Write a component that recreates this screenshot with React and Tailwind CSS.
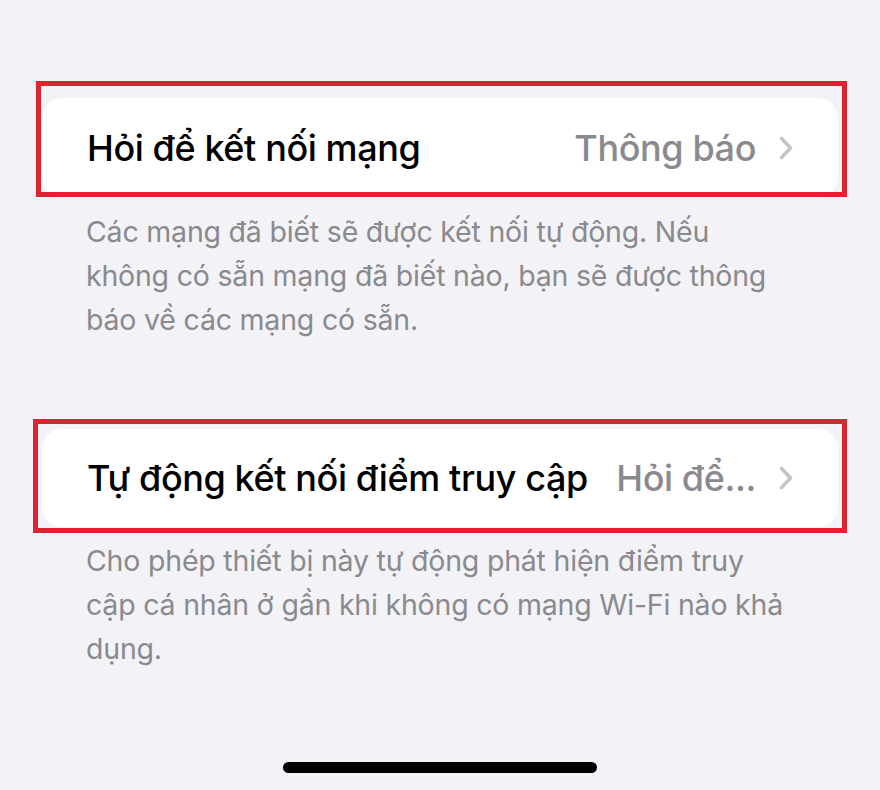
const sections = [
    {
        title: "Hỏi để kết nối mạng",
        value: "Thông báo",
        footer:
            "Các mạng đã biết sẽ được kết nối tự động. Nếu không có sẵn mạng đã biết nào, bạn sẽ được thông báo về các mạng có sẵn.",
    },
    {
        title: "Tự động kết nối điểm truy cập",
        value: "Hỏi để...",
        footer:
            "Cho phép thiết bị này tự động phát hiện điểm truy cập cá nhân ở gần khi không có mạng Wi-Fi nào khả dụng.",
    },
];

export default function App() {
    return (
        <div
            className="w-[880px] h-[790px] bg-[#f2f2f7] flex flex-col pt-[98px] px-[42px] overflow-hidden"
            style={{ fontFamily: "Inter, 'Noto Sans', sans-serif" }}
        >
            <div className="flex flex-col gap-[87px]">
                {sections.map((s, i) => (
                    <Section key={i} {...s} first={i === 0} />
                ))}
            </div>

            {/* home indicator */}
            <div className="mt-auto mb-[17px] self-center w-[314px] h-[11px] rounded-full bg-black" />
        </div>
    );
}

function Chevron() {
    return (
        <svg width="16" height="24" viewBox="0 0 16 24" className="ml-[22px] shrink-0">
            <path
                d="M3.5 2.5 L12.5 12 L3.5 21.5"
                fill="none"
                stroke="#c4c4c9"
                strokeWidth="3.6"
                strokeLinecap="round"
                strokeLinejoin="round"
            />
        </svg>
    );
}

function Section({ title, value, footer, first }) {
    return (
        <div>
            <div className="relative">
                <div
                    className={`bg-white rounded-[20px] flex items-center pl-[45px] pr-[44px] ${
                        first ? "h-[100px]" : "h-[98px]"
                    }`}
                >
                    <span className="text-[36px] font-medium text-black tracking-[-0.4px] whitespace-nowrap">
                        {title}
                    </span>
                    <span className="ml-auto text-[36px] font-medium text-[#8a8a8e] tracking-[-0.4px] whitespace-nowrap">
                        {value}
                    </span>
                    <Chevron />
                </div>

                {/* red highlight frame */}
                <div
                    className={`absolute border-[5px] border-[#dc2530] pointer-events-none ${
                        first
                            ? "left-[-6px] right-[-9px] top-[-17px] bottom-[1px]"
                            : "left-[-9px] right-[-9px] top-[-10px] bottom-[-6px]"
                    }`}
                />
            </div>
            <p className="mt-[12px] pl-[44px] pr-[46px] text-[28.5px] leading-[44px] tracking-[-0.2px] text-[#8a8a8e]">
                {footer}
            </p>
        </div>
    );
}
